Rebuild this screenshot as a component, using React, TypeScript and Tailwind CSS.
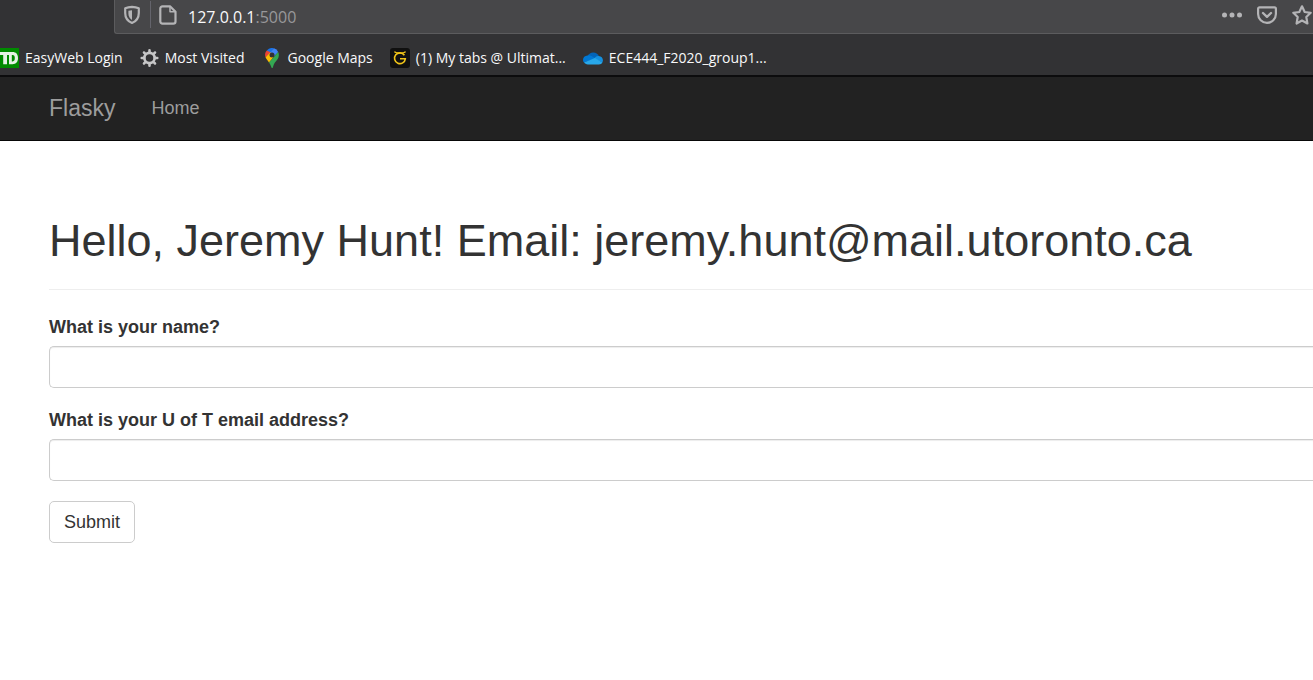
import type { ReactNode } from "react";

function ShieldIcon() {
  return (
    <svg width="20" height="20" viewBox="0 0 20 20" fill="none" aria-hidden="true">
      <path d="M10 1.900C7.700 2 5.200 2.400 3.200 3.200V8c0 4.800 2.600 8.300 6.800 10 4.200-1.700 6.800-5.200 6.800-10V3.200C14.800 2.400 12.300 2 10 1.900z" stroke="#b4b4b6" strokeWidth="2.200" strokeLinejoin="round" />
      <path d="M10 5.200c-1.300 0-2.500.2-3.600.5V8.500c0 2.900 1.300 5.100 3.600 6.500z" fill="#b4b4b6" />
    </svg>
  );
}

function PageIcon() {
  return (
    <svg width="20" height="20" viewBox="0 0 20 20" fill="none" stroke="#b4b4b6" strokeLinejoin="round" aria-hidden="true">
      <path d="M4.500 1.300H12L17.500 6.800V16.500a2.200 2.200 0 0 1-2.200 2.200H4.500a2.200 2.200 0 0 1-2.200-2.200V3.500a2.200 2.200 0 0 1 2.200-2.200z" strokeWidth="2.200" />
      <path d="M12 2V6.800H17" strokeWidth="1.500" />
    </svg>
  );
}

function DotsIcon() {
  return (
    <svg width="20" height="20" viewBox="0 0 20 20" fill="#b4b4b6" aria-hidden="true">
      <circle cx="2.500" cy="10" r="2.500" />
      <circle cx="10" cy="10" r="2.500" />
      <circle cx="17.500" cy="10" r="2.500" />
    </svg>
  );
}

function PocketIcon() {
  return (
    <svg width="20" height="20" viewBox="0 0 20 20" fill="none" stroke="#b4b4b6" strokeWidth="2.200" strokeLinecap="round" strokeLinejoin="round" aria-hidden="true">
      <path d="M2.500 2.300h15a1.400 1.400 0 0 1 1.400 1.400V9a8.900 8.900 0 0 1-17.800 0V3.700a1.400 1.400 0 0 1 1.400-1.400z" />
      <path d="M6 8l4 3.800L14 8" strokeWidth="2.400" />
    </svg>
  );
}

function StarIcon() {
  return (
    <svg width="20" height="20" viewBox="0 0 20 20" fill="none" stroke="#b4b4b6" strokeWidth="2.200" strokeLinejoin="round" aria-hidden="true">
      <path d="M10 1.300l2.700 5.700 6 .8-4.400 4.200 1.100 6.500L10 15.500l-5.400 3 1.100-6.500L1.300 7.800l6-.8z" />
    </svg>
  );
}

function BankIcon() {
  return (
    <svg width="19" height="20" viewBox="0 0 19 20" aria-hidden="true">
      <rect width="19" height="20" fill="#008a00" />
      <path d="M0 4h12.500c3.600 0 5.500 2.100 5.500 6s-2 6.200-5.500 6.200H9V7H7v9.200H3.200V7H0z" fill="#e4f2e4" />
      <path d="M11.800 7v6.400h.8c1.500 0 2.200-1.100 2.200-3.300S14.100 7 12.600 7z" fill="#008a00" />
      <path d="M8 7v9.200" stroke="#008a00" strokeWidth="1.200" />
    </svg>
  );
}

function GearIcon() {
  return (
    <svg width="19" height="20" viewBox="0 0 20 20" fill="none" stroke="#c6c6c7" aria-hidden="true">
      <circle cx="10" cy="10" r="5.400" strokeWidth="2.900" />
      <path d="M10 1.800v2M10 16.200v2M1.800 10h2M16.200 10h2M4.200 4.200l1.400 1.400M14.400 14.400l1.400 1.400M4.200 15.800l1.400-1.400M14.400 5.600l1.400-1.400" strokeWidth="2.700" strokeLinecap="round" />
    </svg>
  );
}

function MapPinIcon() {
  return (
    <svg width="20" height="20" viewBox="0 0 20 20" aria-hidden="true">
      <path d="M4.800 2.400A7 7 0 0 1 12 .3L8 6.500z" fill="#1a73e8" />
      <path d="M4.800 2.400A6.900 6.900 0 0 0 3.500 9.300L9.500 4.700z" fill="#ea4335" />
      <path d="M12 .3a6.900 6.900 0 0 1 4.200 3.600L11.500 9 7.600 5.500z" fill="#4285f4" />
      <path d="M3.500 9.300c.8 1.900 2.200 3.200 3.500 5.200l5.300-6.300-4-3.600z" fill="#fbbc04" />
      <path d="M16.200 3.900c1.100 2.300.8 5-.5 7-1.700 2.600-3.700 4-4.400 7-.3 1.200-.5 2.100-1.100 2.100s-.9-1-1.300-2.100C8.400 16.600 7.900 15.700 7 14.500z" fill="#34a853" />
      <circle cx="10" cy="6.900" r="2.500" fill="#323234" />
    </svg>
  );
}

function GuitarIcon() {
  return (
    <svg width="20" height="20" viewBox="0 0 20 20" fill="none" aria-hidden="true">
      <rect width="20" height="20" rx="3" fill="#101010" />
      <path d="M14.400 7.200A5.400 5.400 0 1 0 15.300 10.800H10" stroke="#f0c419" strokeWidth="1.600" />
      <path d="M4.400 3.600c1.200 1.300 3 1.500 5.600 1.500s4.400-.2 5.600-1.500" stroke="#f0c419" strokeWidth="1.400" />
    </svg>
  );
}

function CloudIcon() {
  return (
    <svg width="20" height="20" viewBox="0 0 20 20" aria-hidden="true">
      <path d="M4.800 8.200a6 6 0 0 1 11-.2L10 13z" fill="#0364b8" />
      <path d="M4.500 7.400C1.800 7.500 0 9.400 0 11.900c0 1.100.4 2 1 2.700l11.500-4.200-4-2.300a7 7 0 0 0-4-.7z" fill="#0078d4" />
      <path d="M15.800 8c-1.400-.1-2.500.3-3.500 1.200L11 10.500l8.400 4c1.500-3.100-.4-6.300-3.600-6.500z" fill="#1490df" />
      <path d="M1 14.600c.9 1.200 2.200 1.800 3.800 1.800h11.100c1.600 0 2.900-.7 3.500-1.900l-7.500-4.600z" fill="#28a8ea" />
    </svg>
  );
}

function Bookmark({ icon, children }: { icon: ReactNode; children: ReactNode }) {
  return (
    <a href="#" className="flex shrink-0 items-center gap-[6px] whitespace-nowrap">
      {icon}
      <span>{children}</span>
    </a>
  );
}

function Field({ id, label }: { id: string; label: string }) {
  return (
    <div className="mb-5">
      <label htmlFor={id} className="mb-[7px] block text-[18px] leading-6 font-bold">
        {label}
      </label>
      <input
        id={id}
        type="text"
        className="block h-[42px] w-full rounded-l-[5px] border border-r-0 border-[#ccc] bg-white px-4 text-[18px] shadow-[inset_0_1px_1px_rgba(0,0,0,0.075)] outline-none focus:border-[#66afe9]"
      />
    </div>
  );
}

export default function App() {
  return (
    <div className="min-h-screen overflow-x-hidden bg-white font-['Liberation_Sans',Arial,sans-serif] text-[#333]">
      <header className="border-b-2 border-[#0c0c0d] bg-[#323234] font-['Open_Sans','Noto_Sans',sans-serif] text-[#f9f9fa]">
        <div className="ml-[114px] flex h-[34px] items-center rounded-bl-[3px] border-b border-l border-[#5c5c5e] bg-[#474749] pr-px pb-1">
          <button type="button" aria-label="Site protections" className="ml-[7px]">
            <ShieldIcon />
          </button>
          <span className="ml-2 h-[27px] w-px bg-[#64646c]" />
          <button type="button" aria-label="Site information" className="ml-[7px]">
            <PageIcon />
          </button>
          <div className="mt-[5px] ml-[10px] flex-1 text-[16px] leading-6">
            127.0.0.1<span className="text-[#98989a]">:5000</span>
          </div>
          <div className="flex gap-[15px]">
            <button type="button" aria-label="Page actions"><DotsIcon /></button>
            <button type="button" aria-label="Save to Pocket"><PocketIcon /></button>
            <button type="button" aria-label="Bookmark this page"><StarIcon /></button>
          </div>
        </div>
        <nav aria-label="Bookmarks" className="flex h-[41px] items-center gap-[17px] pt-[7px] text-[14px] leading-5">
          <Bookmark icon={<BankIcon />}>EasyWeb Login</Bookmark>
          <Bookmark icon={<GearIcon />}>Most Visited</Bookmark>
          <Bookmark icon={<MapPinIcon />}>Google Maps</Bookmark>
          <Bookmark icon={<GuitarIcon />}>(1) My tabs @ Ultimat...</Bookmark>
          <Bookmark icon={<CloudIcon />}>ECE444_F2020_group1...</Bookmark>
        </nav>
      </header>

      <nav aria-label="Main" className="flex h-16 items-center border-b border-[#080808] bg-[#222] pb-px pl-[49px] text-[#9d9d9d]">
        <a href="#" className="text-[23px] leading-6">Flasky</a>
        <a href="#" className="ml-9 text-[18px] leading-6">Home</a>
      </nav>

      <main className="pt-[75px] pl-[49px]">
        <div className="mb-[25px] border-b border-[#eee] pb-[23px]">
          <h1 className="text-[45px] leading-[50px] whitespace-nowrap">
            Hello, Jeremy Hunt! Email: jeremy.hunt@mail.utoronto.ca
          </h1>
        </div>
        <form onSubmit={(event) => event.preventDefault()}>
          <Field id="name" label="What is your name?" />
          <Field id="email" label="What is your U of T email address?" />
          <button
            type="submit"
            className="h-[42px] rounded-[5px] border border-[#ccc] bg-white px-[14px] text-[18px] leading-6"
          >
            Submit
          </button>
        </form>
      </main>
    </div>
  );
}
